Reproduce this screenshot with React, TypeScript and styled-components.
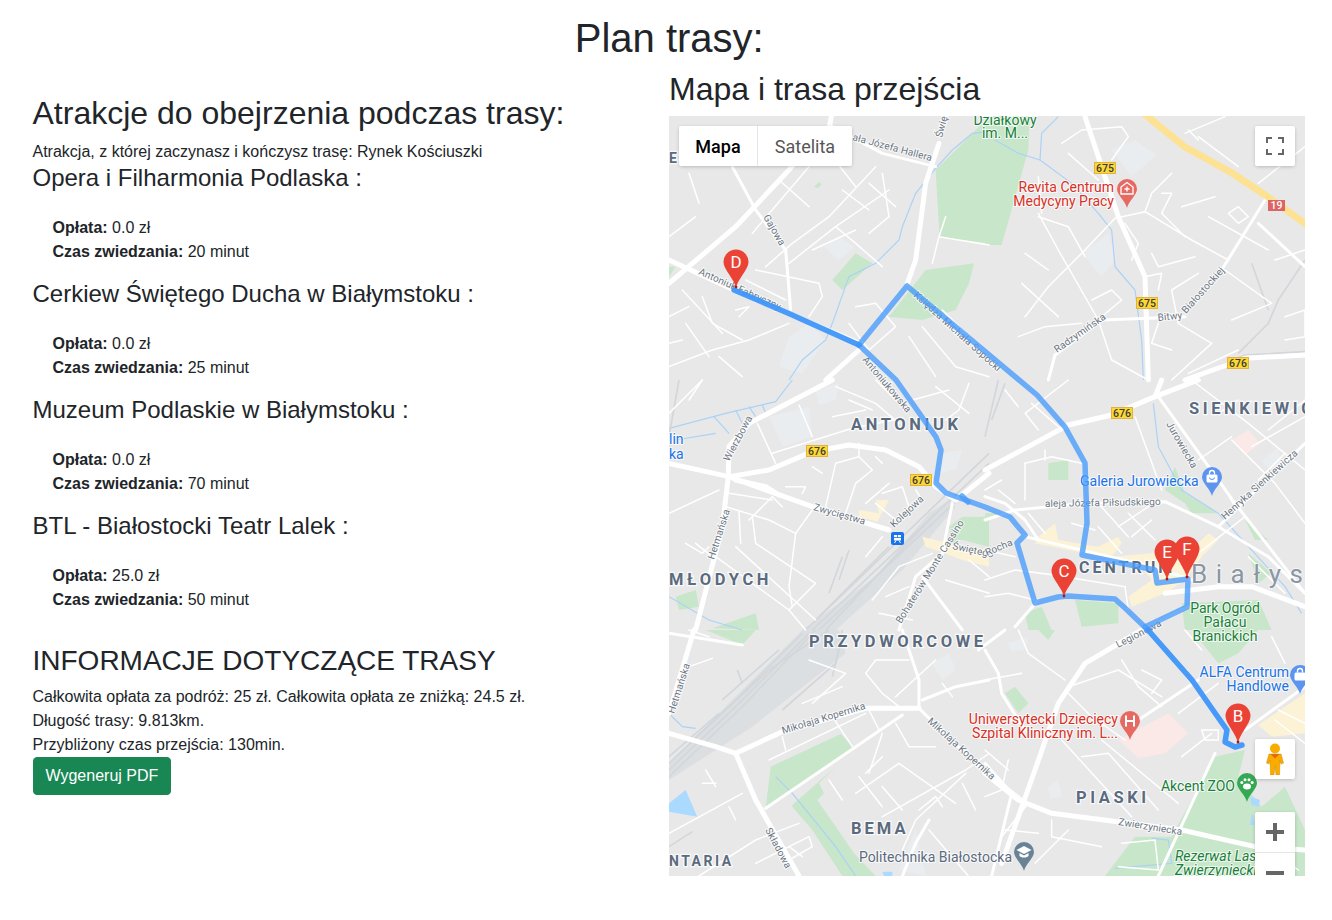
import React from 'react';
import styled, { createGlobalStyle } from 'styled-components';

const GlobalStyle = createGlobalStyle`
  html, body {
    margin: 0;
    background: #fff;
    color: #212529;
    font-family: "Liberation Sans", Arial, sans-serif;
    font-size: 16px;
    line-height: 1.5;
  }
`;

const Page = styled.div`
  padding: 14px 27px 44px 32.5px;
`;
const Title = styled.h1`
  margin: 0 0 8px;
  padding-left: 1px;
  font-size: 40px;
  font-weight: 400;
  line-height: 1.2;
  text-align: center;
`;
const Columns = styled.div`
  display: grid;
  grid-template-columns: 636.5px 636px;
`;
const InfoColumn = styled.div`
  padding-top: 24px;
`;
const SectionTitle = styled.h2`
  margin: 0 0 8px;
  font-size: 32px;
  font-weight: 400;
  line-height: 1.2;
`;
const InfoTitle = styled(SectionTitle)`
  margin: 30px 0 5px;
  font-size: 28px;
  line-height: 38px;
`;
const AttractionName = styled.h4`
  margin: 0 0 8px;
  font-size: 24px;
  font-weight: 400;
  line-height: 1.2;
`;
const Facts = styled.ul`
  margin: 0 0 16px;
  padding: 15px 0 0 20px;
  list-style: none;
`;
const Line = styled.div``;
const PdfButton = styled.button`
  display: block;
  height: 38px;
  padding: 6px 12px;
  border: 1px solid #198754;
  border-radius: 4px;
  background: #198754;
  color: #fff;
  font: inherit;
`;

const MapBox = styled.div`
  position: relative;
  width: 636px;
  height: 760px;
  overflow: hidden;
  background: #e8e8e8;
`;
const MapSvg = styled.svg`
  display: block;
`;
const Control = styled.div`
  position: absolute;
  background: #fff;
  border-radius: 2px;
  box-shadow: rgba(0, 0, 0, 0.3) 0 1px 4px -1px;
`;
const TypeSwitch = styled(Control)`
  left: 10px;
  top: 10px;
  display: flex;
  height: 40px;
  font-family: Roboto, sans-serif;
  font-size: 18px;
`;
const TypeTab = styled.div<{ $active?: boolean }>`
  display: flex;
  align-items: center;
  justify-content: center;
  width: ${p => (p.$active ? 78 : 94)}px;
  color: ${p => (p.$active ? '#000' : '#565656')};
  font-weight: ${p => (p.$active ? 500 : 400)};
  border-left: ${p => (p.$active ? 'none' : '1px solid #e6e6e6')};
`;
const SquareButton = styled(Control)<{ $top: number }>`
  left: 586px;
  top: ${p => p.$top}px;
  display: flex;
  align-items: center;
  justify-content: center;
  width: 40px;
  height: 40px;
  color: #666;
`;
const ZoomBox = styled(Control)`
  left: 586px;
  top: 696px;
  width: 40px;
  height: 81px;
  color: #666;
`;
const ZoomStep = styled.div`
  display: flex;
  align-items: center;
  justify-content: center;
  height: 40px;
`;
const ZoomRule = styled.div`
  height: 1px;
  background: #e6e6e6;
`;

const Street = styled.polyline<{ $w: number }>`
  fill: none;
  stroke: #fff;
  stroke-width: ${p => p.$w};
  stroke-linejoin: round;
  stroke-linecap: round;
`;
const River = styled.polyline`
  fill: none;
  stroke: #aad2f7;
  stroke-width: 3.5;
`;
const Rail = styled.polyline`
  fill: none;
  stroke: #d3d6da;
  stroke-width: 5;
`;
const Area = styled.polygon<{ $fill: string }>`
  fill: ${p => p.$fill};
`;
const Highway = styled.polyline`
  fill: none;
  stroke: #fde293;
  stroke-width: 7;
  stroke-linejoin: round;
`;
const RouteLine = styled.polyline<{ $deep?: boolean }>`
  fill: none;
  stroke: ${p => (p.$deep ? '#3f96f9' : '#4a9cfb')};
  stroke-width: 5.5;
  stroke-opacity: ${p => (p.$deep ? 0.95 : 0.8)};
  stroke-linejoin: round;
  stroke-linecap: round;
`;
const RoadName = styled.text`
  font-family: Roboto, sans-serif;
  font-size: 10px;
  letter-spacing: 0.1px;
  fill: #6b7683;
  stroke: #fff;
  stroke-width: 2px;
  stroke-opacity: 0.75;
  paint-order: stroke;
`;
const District = styled.text<{ $size?: number; $gap?: number }>`
  font-family: Roboto, sans-serif;
  font-size: ${p => p.$size ?? 16.5}px;
  font-weight: 700;
  letter-spacing: ${p => p.$gap ?? 3.6}px;
  fill: #5b6b7f;
  stroke: #fff;
  stroke-width: 2.5px;
  stroke-opacity: 0.8;
  paint-order: stroke;
`;
const CityName = styled.text`
  font-family: Roboto, sans-serif;
  font-size: 26px;
  letter-spacing: 8.5px;
  fill: #8a96a3;
  stroke: #fff;
  stroke-width: 2px;
  stroke-opacity: 0.6;
  paint-order: stroke;
`;
const Place = styled.text<{ $color: string; $italic?: boolean }>`
  font-family: Roboto, sans-serif;
  font-size: 14px;
  font-style: ${p => (p.$italic ? 'italic' : 'normal')};
  fill: ${p => p.$color};
  stroke: #fff;
  stroke-width: 2px;
  stroke-opacity: 0.8;
  paint-order: stroke;
`;
const PinLetter = styled.text`
  font-family: Roboto, sans-serif;
  font-size: 17px;
  fill: #fff;
  text-anchor: middle;
`;
const ShieldText = styled.text<{ $light?: boolean }>`
  font-family: Roboto, sans-serif;
  font-size: 10.5px;
  font-weight: 500;
  fill: ${p => (p.$light ? '#fff' : '#3c3c3c')};
  text-anchor: middle;
`;

type Tile = {
  x: number;
  y: number;
  parks?: string[];
  soft?: string[];
  yards?: string[];
  plazas?: string[];
  pink?: string[];
  lakes?: string[];
  rivers?: string[];
  rails?: string[];
  thin?: string[];
  mid?: string[];
  thick?: string[];
};

// coordinates read off 3x crops, one set per crop origin
const tiles: Tile[] = [
  {
    x: 669, y: 110,
    parks: ['800,180 960,20 960,400 812,382', '490,510 560,430 610,460 520,540', '770,480 915,460 900,520 860,600 760,630 660,620', '435,230 450,215 458,225 445,235', '0,470 20,470 0,500'],
    soft: ['465,410 510,380 555,410 510,450', '360,680 420,640 470,690 400,790 330,770'],
    rivers: ['960,65 910,70 850,120 800,175 740,250 700,350 690,390 620,460 540,500 490,640 470,690 400,750 360,810'],
    thin: ['620,170 480,320 370,400 290,470', '420,170 250,370', '660,240 500,350 360,460', '500,350 560,400 640,470', '260,480 450,520 460,560 420,620', '230,510 350,570', '0,770 130,720 240,690 360,640', '560,590 620,580 680,650 600,720 540,640', '760,650 860,770 960,800', '720,680 800,800', '820,600 960,740', '100,560 130,640 220,690', '40,540 160,670', '0,620 60,590', '50,640 120,740', '200,600 240,590 210,620', '430,420 560,360', '330,210 420,290', '520,240 600,300', '600,220 680,290', '810,380 960,405', '830,320 810,380 790,460', '490,140 560,230', '60,190 90,280', '0,380 80,320', '640,190 660,320 600,370', '400,90 440,70', '0,700 40,690', '150,740 220,800'],
    mid: ['490,50 640,130 800,170', '190,170 260,300 350,420 365,600'],
    thick: ['0,520 200,350 360,180 400,130', '0,450 195,540 570,700', '810,100 770,220 740,450 715,520', '570,720 470,810', '490,0 480,60'],
  },
  {
    x: 985, y: 110,
    parks: ['0,0 135,0 130,120 50,405 0,405'],
    soft: ['380,120 450,90 515,135 440,200', '290,430 370,370 390,450 350,500'],
    rivers: ['220,20 170,70 165,150 260,220 340,310 380,360 390,470 450,540 470,690 475,810', '30,90 100,130 165,150'],
    rails: ['960,450 880,570 850,640 760,730', '800,460 850,600', '600,810 780,735 960,725'],
    thin: ['230,100 290,60 410,50 430,80 380,150', '250,130 340,210', '160,320 250,350 300,440', '480,305 390,325 300,420 190,530 120,620', '480,305 620,390 730,450', '480,305 500,250 560,190', '160,310 220,420 340,630 380,750 490,810', '530,250 560,250 530,310 600,380', '730,310 760,290 790,320 760,340 730,310', '670,320 850,420', '590,290 690,260', '500,430 520,470 630,440', '640,490 560,540 580,640 680,700', '480,500 530,490 520,540', '110,520 220,620', '120,430 190,480', '320,570 380,540 410,570 350,620', '100,680 180,650 290,640', '560,720 500,700 520,640', '680,700 560,810', '610,790 760,720', '870,450 960,420', '900,620 960,600 960,680 900,690', '720,480 860,580 740,630', '600,70 720,20', '640,80 760,170', '820,220 960,110', '610,60 640,90', '420,340 460,400 440,450', '160,200 170,310'],
    mid: ['490,625 600,620', '490,625 350,630 210,735 190,810', '840,270 710,480', '820,340 960,470'],
    thick: ['300,20 400,320 480,500 490,810', '600,810 780,745 960,735'],
  },
  {
    x: 669, y: 380,
    parks: ['840,440 880,410 960,410 960,500 880,480 850,490', '130,745 260,700 270,750', '20,650 80,630 90,680 30,690'],
    soft: ['300,110 420,80 430,170 340,200', '440,30 510,10 500,60 450,75', '820,220 880,210 860,270 810,280'],
    yards: ['400,750 620,590 780,400 840,360 860,380 700,570 500,750'],
    plazas: ['570,390 630,400 620,360 660,360 625,425 570,410', '760,470 840,490 960,510 960,560 880,540 800,510 770,500'],
    rivers: ['0,145 170,100 320,65 370,0', '135,110 180,160', '200,90 220,130', '240,80 260,110', '280,75 290,100', '20,180 140,160', '0,650 120,720 220,750'],
    rails: ['410,750 960,220', '430,750 960,250', '450,750 940,290', '470,750 800,400', '440,720 660,500', '510,600 540,510', '480,640 520,530', '0,170 30,0'],
    thin: ['390,75 430,170', '265,130 320,250', '310,220 550,145 700,115', '570,190 570,230 610,270 560,310 530,400', '570,230 500,250 470,380', '430,260 460,280', '640,340 700,320 720,380 680,420', '660,310 590,370', '620,370 680,420', '0,400 150,330', '180,340 310,360', '170,380 300,420 380,460', '210,395 215,490', '250,410 260,490', '260,490 440,610 360,690', '380,460 360,620 370,680', '430,390 380,460', '140,530 360,690 410,750', '200,500 440,720', '80,490 130,530', '50,490 100,520 120,500', '620,0 700,80', '500,20 620,70 690,130', '900,10 870,90 830,120', '800,20 900,100', '740,330 760,360', '590,530 640,470', '610,660 690,560 790,520', '650,650 720,620', '630,700 730,720', '900,540 960,590', '830,600 960,640', '730,60 840,30', '540,60 610,90', '490,110 590,90', '0,100 100,0', '60,60 100,0', '240,420 310,350 340,380', '350,320 410,320 400,340', '620,230 640,250'],
    mid: ['760,590 880,750', '850,370 820,520 740,590 690,750'],
    thick: ['490,0 240,130 180,200 178,290 160,440 80,750', '0,250 180,290 430,380 660,450', '180,290 300,270 430,215 540,195 650,210 750,260 800,320 860,360 960,280', '200,300 290,320 330,345'],
  },
  {
    x: 985, y: 380,
    parks: ['190,250 250,240 250,300 190,300', '0,400 40,400 0,430', '270,660 400,670 400,730 290,740', '120,700 170,680 200,750 130,750', '540,330 570,260 600,340 700,400 620,400 600,370', '590,670 820,660 860,750 600,750', '780,420 850,480 810,480', '790,520 860,580 820,610'],
    soft: ['830,240 880,200 890,250 850,270'],
    pink: ['740,180 790,150 825,190 780,225'],
    plazas: ['160,470 210,430 220,480 340,500 400,470 410,490 380,530 500,520 520,500 530,540 640,490 670,460 700,480 650,530 600,600 540,640 440,680 430,650 500,600 470,560 300,520 150,490'],
    rivers: ['505,70 520,200 590,330 700,400 900,620 950,700'],
    rails: ['0,170 40,0', '20,120 60,10'],
    thin: ['120,250 200,230 290,250', '120,250 120,360', '180,210 180,240', '450,110 530,330', '400,440 490,380', '430,400 510,480', '440,470 500,420', '340,370 430,470', '0,600 90,570 250,590', '240,590 420,620', '420,620 430,690', '0,650 70,640 150,660', '620,0 790,130 960,270', '800,200 960,110', '740,180 870,310 960,430', '700,100 760,60', '850,150 960,60', '640,240 740,170', '0,510 90,530', '640,520 780,410', '790,530 900,640', '250,0 120,100 160,150', '60,30 100,80', '140,70 220,140', '820,300 900,220', '710,310 750,380', '40,330 90,370', '340,440 410,520', '130,400 180,460', '260,430 330,450', '0,330 50,300'],
    mid: ['0,350 60,370 120,420 160,480', '120,470 500,560 620,600', '90,740 160,660', '610,680 480,745', '520,50 750,370 960,640', '0,420 90,390 300,370 540,365 700,440 850,530 960,640', '700,440 960,190'],
    thick: ['0,270 250,135 380,105 510,50 640,0', '540,640 700,620 800,620 960,680', '510,50 530,0'],
  },
  {
    x: 669, y: 630,
    parks: ['305,410 515,312 555,355 290,535', '370,525 500,410 450,460 465,490 445,510 555,670 620,738 520,738 430,600 370,530', '110,0 260,0 220,45'],
    soft: ['790,100 840,70 860,120 820,150', '690,720 740,600 770,738'],
    yards: ['0,400 400,0 510,0 530,70 250,290 0,450'],
    lakes: ['0,520 50,480 85,560 0,545', '640,725 670,725 670,738 645,738'],
    rivers: ['320,440 370,490 500,650 560,738', '0,250 40,290 80,295'],
    rails: ['0,420 200,230 420,10', '0,440 220,230 440,0', '0,400 190,220 400,10', '60,340 300,120 480,0', '160,210 330,60', '0,380 150,250', '340,240 500,100 520,0', '490,140 520,20', '0,650 70,605', '205,120 220,160'],
    thin: ['60,110 130,85', '590,130 620,90 720,90', '590,130 640,190 690,230', '680,200 800,90', '600,240 630,300', '490,260 550,350', '300,390 590,250', '340,320 350,360', '640,310 600,430', '680,280 720,350 800,350', '560,490 690,400 860,520', '590,430 640,380', '480,450 520,510', '570,440 640,530', '640,470 700,540', '640,560 890,420 960,370', '0,610 220,490', '180,530 200,570', '110,420 140,470', '100,460 140,460', '90,738 260,630 390,580', '260,700 420,620 430,650 360,690', '360,650 400,680', '820,160 850,200', '750,540 800,500 820,530', '780,600 900,740', '880,460 920,540', '700,660 740,570 890,430', '420,90 530,130 430,220', '400,220 520,170', '60,0 120,20'],
    mid: ['290,535 700,255', '760,210 860,170 960,150', '750,235 960,440', '700,0 750,150 750,235', '0,10 220,45', '700,738 740,640 780,570'],
    thick: ['0,310 140,350 200,370', '200,370 340,305 590,235 750,235', '200,370 260,510 390,738', '0,250 75,0'],
  },
  {
    x: 985, y: 630,
    parks: ['620,0 820,0 760,70 700,100', '60,190 90,170 130,220 100,250', '690,380 780,360 760,440 830,530 900,470 960,600 960,738 360,738 450,620 560,620', '160,0 210,0 190,30'],
    soft: ['70,40 130,20 120,60 80,65', '190,470 220,450 230,500 195,505'],
    pink: ['400,330 550,250 610,310 540,370 460,385'],
    plazas: ['820,285 960,190 960,310 860,320', '590,110 610,120 600,140'],
    lakes: ['795,500 825,510 820,530 800,525', '800,550 810,585 795,585'],
    rivers: ['500,625 550,630 560,700 390,715'],
    thin: ['100,0 130,70 240,150', '0,150 110,130', '250,170 400,120 530,200', '410,90 460,170 530,230', '470,120 530,150 500,190', '240,180 320,260 420,330', '230,330 440,560', '290,380 370,370 520,540', '350,330 580,520', '580,250 700,160', '590,380 680,310', '0,500 50,480 70,390', '200,570 200,620 350,650', '60,600 160,610', '150,700 250,600', '0,420 130,520 50,620', '50,470 120,520', '650,300 700,300 700,330 660,330 650,300', '600,0 650,60', '860,20 900,100', '870,270 960,340', '410,640 510,630 520,720 400,710', '960,280 880,240', '0,360 70,420', '860,660 940,720'],
    mid: ['460,270 640,150', '780,300 960,170', '690,370 520,738', '0,60 40,130 50,190 100,270 130,310', '-20,60 60,0', '0,400 80,490 20,738'],
    thick: ['470,0 300,100 220,220 150,420 50,700', '0,430 100,510 200,550 590,600 810,650 960,660'],
  },
];

const layer = (render: (t: Tile) => React.ReactNode) =>
  tiles.map((t, i) => (
    <g key={i} transform={`translate(${t.x} ${t.y}) scale(0.33333)`}>
      {render(t)}
    </g>
  ));

const routeLegs = [
  '859,345 907,286 1037,395 1065,427 1085,463 1087,523 1082,555 1155,570 1157,583 1188,579 1187,607 1145,627',
  '859,345 896,380 936,437 941,450 936,483 946,493 985,507 1010,517 1025,535 1017,543 1035,603 1058,597 1068,596 1115,599 1125,608 1148,630',
  '962,496 968,502',
];
const deepLegs = [
  '734,290 790,314 859,345',
  '1148,630 1192,680 1215,713 1227,730 1225,742 1235,747 1242,745',
];

const roadNames: [string, number, number, number][] = [
  ['Świętego', 942, 138, -75],
  ['ała Józefa Hallera', 852, 140, 15],
  ['Gajowa', 763, 217, 60],
  ['Antoniuk Fabryczny', 698, 274, 24],
  ['Księdza Michała Sopoćki', 913, 296, 42],
  ['Antoniukowska', 862, 360, 50],
  ['Radzymińska', 1057, 353, -35],
  ['Bitwy', 1158, 321, -6],
  ['Białostockiej', 1186, 314, -48],
  ['Jurowiecka', 1166, 424, 60],
  ['Henryka Sienkiewicza', 1225, 520, -42],
  ['aleja Józefa Piłsudskiego', 1045, 507, -1],
  ['Świętego', 952, 549, 12],
  ['Rocha', 987, 556, -23],
  ['Wierzbowa', 729, 462, -62],
  ['Hetmańska', 714, 560, -72],
  ['Zwycięstwa', 813, 510, 16],
  ['Kolejowa', 894, 528, -43],
  ['Bohaterów Monte Cassino', 901, 624, -58],
  ['Hetmańska', 674, 714, -72],
  ['Mikołaja Kopernika', 783, 734, -17],
  ['Mikołaja Kopernika', 927, 722, 42],
  ['Składowa', 765, 830, 62],
  ['Legionowa', 1118, 648, -27],
  ['Zwierzyniecka', 1118, 825, 9],
];

const districts: [string, number, number, number?, number?][] = [
  ['ES', 669, 163, 14, 2],
  ['ANTONIUK', 851, 430],
  ['SIENKIEWICZ', 1189, 414],
  ['MŁODYCH', 669, 585],
  ['PRZYDWORCOWE', 809, 647],
  ['CENTRUM', 1079, 573, 16, 3],
  ['PIASKI', 1076, 803],
  ['BEMA', 851, 834, 16.5, 3],
  ['NTARIA', 669, 866, 14, 2.5],
];

const places: [string, number, number, string, ('end' | 'middle')?, boolean?][] = [
  ['Działkowy', 1005, 125, '#188038', 'middle'],
  ['im. M...', 1005, 138, '#188038', 'middle'],
  ['Revita Centrum', 1114, 192, '#d93025', 'end'],
  ['Medycyny Pracy', 1114, 206, '#d93025', 'end'],
  ['Galeria Jurowiecka', 1080, 486, '#1a73e8'],
  ['Park Ogród', 1225, 613, '#188038', 'middle'],
  ['Pałacu', 1225, 627, '#188038', 'middle'],
  ['Branickich', 1225, 641, '#188038', 'middle'],
  ['ALFA Centrum', 1289, 677, '#1a73e8', 'end'],
  ['Handlowe', 1289, 691, '#1a73e8', 'end'],
  ['Uniwersytecki Dziecięcy', 1118, 724, '#d93025', 'end'],
  ['Szpital Kliniczny im. L...', 1118, 738, '#d93025', 'end'],
  ['Akcent ZOO', 1235, 791, '#188038', 'end'],
  ['Politechnika Białostocka', 1012, 862, '#5b6b7f', 'end'],
  ['Rezerwat Las', 1175, 861, '#188038', undefined, true],
  ['Zwierzyniecki', 1175, 875, '#188038', undefined, true],
  ['lin', 669, 444, '#1a73e8'],
  ['ka', 669, 459, '#1a73e8'],
];

const shields: [string, number, number][] = [
  ['675', 1105, 168],
  ['675', 1147, 303],
  ['676', 1238, 363],
  ['676', 1122, 413],
  ['676', 817, 451],
  ['676', 921, 480],
];

const pinPath = (cx: number, cy: number, r: number, tip: number) =>
  `M${cx},${tip} C${cx - 1.5},${tip - r * 0.7} ${cx - r},${cy + r * 0.6} ${cx - r},${cy} ` +
  `A${r},${r} 0 1 1 ${cx + r},${cy} C${cx + r},${cy + r * 0.6} ${cx + 1.5},${tip - r * 0.7} ${cx},${tip} Z`;

const markers: [string, number, number, number][] = [
  ['D', 736, 262, 288],
  ['C', 1064, 571, 597],
  ['F', 1187, 549, 578],
  ['E', 1167, 552, 580],
  ['B', 1238, 716, 743],
];

const Marker = ({ label, x, y, tip }: { label: string; x: number; y: number; tip: number }) => (
  <g>
    <path d={pinPath(x, y, 12.5, tip)} fill="#ea4335" />
    <circle cx={x} cy={tip - 1} r="1.4" fill="#b31412" />
    <PinLetter x={x} y={y + 5.5}>{label}</PinLetter>
  </g>
);

const PoiPins = () => (
  <g>
    <path d={pinPath(1127, 189, 10, 208)} fill="#e66a62" />
    <path d="M1121 187l6-4.500 6 4.500v7h-12z" fill="none" stroke="#fff" strokeWidth="1.3" />
    <path d="M1127 186.500v5M1124.500 189h5" stroke="#fff" strokeWidth="1.3" />

    <path d={pinPath(1130, 721, 10, 740)} fill="#e66a62" />
    <path d="M1126 715.500v11M1134 715.500v11M1126 721h8" stroke="#fff" strokeWidth="2" fill="none" />

    <path d={pinPath(1212, 477, 10, 496)} fill="#5c94f0" />
    <rect x="1206.500" y="474.500" width="11" height="8" rx="1.500" fill="#fff" />
    <path d="M1209.500 474.500v-1.500a2.500 2.500 0 0 1 5 0v1.500" fill="none" stroke="#fff" strokeWidth="1.300" />
    <path d="M1209.500 477.500a2.500 2 0 0 0 5 0" fill="none" stroke="#5c94f0" strokeWidth="1" />

    <path d={pinPath(1300, 675, 10, 694)} fill="#5c94f0" />
    <rect x="1294.500" y="672.500" width="11" height="8" rx="1.500" fill="#fff" />
    <path d="M1297.500 672.500v-1.500a2.500 2.500 0 0 1 5 0v1.500" fill="none" stroke="#fff" strokeWidth="1.300" />

    <path d={pinPath(1247, 783, 10, 802)} fill="#34a853" />
    <ellipse cx="1247" cy="786.500" rx="4" ry="3" fill="#fff" />
    <circle cx="1241.800" cy="782.500" r="1.500" fill="#fff" />
    <circle cx="1245" cy="779.800" r="1.500" fill="#fff" />
    <circle cx="1249" cy="779.800" r="1.500" fill="#fff" />
    <circle cx="1252.200" cy="782.500" r="1.500" fill="#fff" />

    <path d={pinPath(1024, 852, 10, 871)} fill="#6a8296" />
    <path d="M1024 846l7.500 4-7.500 4-7.500-4z" fill="#fff" />
    <path d="M1019.500 853v3c2.500 2 6.500 2 9 0v-3l-4.500 2.500z" fill="#fff" />
  </g>
);

const RoadMap = () => (
  <MapSvg width="636" height="760" viewBox="669 116 636 760">
    {layer(t => (t.parks ?? []).map(p => <Area key={p} $fill="#c8e6c9" points={p} />))}
    {layer(t => (t.soft ?? []).map(p => <Area key={p} $fill="#e9edf0" points={p} />))}
    {layer(t => (t.yards ?? []).map(p => <Area key={p} $fill="#dcdfe2" points={p} />))}
    {layer(t => (t.plazas ?? []).map(p => <Area key={p} $fill="#fcf2d6" points={p} />))}
    {layer(t => (t.pink ?? []).map(p => <Area key={p} $fill="#fbe9e7" points={p} />))}
    {layer(t => (t.lakes ?? []).map(p => <Area key={p} $fill="#aadaff" points={p} />))}
    {layer(t => (t.rivers ?? []).map(p => <River key={p} points={p} />))}
    {layer(t => (t.rails ?? []).map(p => <Rail key={p} points={p} />))}
    {layer(t => (t.thin ?? []).map(p => <Street key={p} $w={4.5} points={p} />))}
    {layer(t => (t.mid ?? []).map(p => <Street key={p} $w={9} points={p} />))}
    {layer(t => (t.thick ?? []).map(p => <Street key={p} $w={15} points={p} />))}
    <Highway points="1142,112 1185,147 1232,173 1268,197 1310,227" />

    {roadNames.map(([name, x, y, angle]) => (
      <RoadName key={`${name}${x}`} x={x} y={y} transform={`rotate(${angle} ${x} ${y})`}>{name}</RoadName>
    ))}
    {districts.map(([name, x, y, size, gap]) => (
      <District key={name} x={x} y={y} $size={size} $gap={gap}>{name}</District>
    ))}
    <CityName x="1191" y="583">Białys</CityName>
    {places.map(([name, x, y, color, anchor, italic]) => (
      <Place key={name} x={x} y={y} $color={color} $italic={italic} textAnchor={anchor}>{name}</Place>
    ))}

    {shields.map(([code, x, y]) => (
      <g key={`${code}${x}`}>
        <rect x={x - 10.5} y={y - 5.5} width="21" height="11" fill="#fdd835" stroke="#e3b23a" />
        <ShieldText x={x} y={y + 4}>{code}</ShieldText>
      </g>
    ))}
    <rect x="1268" y="200" width="17" height="11" fill="#dd6464" />
    <ShieldText $light x="1276.500" y="209">19</ShieldText>

    <rect x="891" y="532" width="13" height="13" rx="2" fill="#1a73e8" />
    <path d="M894 535h7v5.500h-7z" fill="#fff" />
    <path d="M894.500 543l1.500-2.500M900.500 543l-1.500-2.500" stroke="#fff" />
    <path d="M894 537.500h7M897.500 535v2.500" stroke="#1a73e8" strokeWidth=".8" />

    <PoiPins />
    {routeLegs.map(points => <RouteLine key={points} points={points} />)}
    {deepLegs.map(points => <RouteLine key={points} $deep points={points} />)}
    {markers.map(([label, x, y, tip]) => <Marker key={label} label={label} x={x} y={y} tip={tip} />)}
  </MapSvg>
);

const FullscreenIcon = () => (
  <svg width="18" height="18" viewBox="0 0 18 18">
    <path d="M1 6V1h5M12 1h5v5M17 12v5h-5M6 17H1v-5" fill="none" stroke="#666" strokeWidth="2" />
  </svg>
);

const PlusIcon = () => (
  <svg width="18" height="18" viewBox="0 0 18 18">
    <path d="M0 9h18M9 0v18" stroke="#666" strokeWidth="4" />
  </svg>
);

const MinusIcon = () => (
  <svg width="18" height="18" viewBox="0 0 18 18">
    <path d="M0 9h18" stroke="#666" strokeWidth="4" />
  </svg>
);

const Pegman = () => (
  <svg width="18" height="32" viewBox="0 0 18 32">
    <circle cx="9" cy="5.500" r="5" fill="#f9ab00" />
    <path d="M3 11h12l2.500 9-2.500 1-1-4-.5 15H10l-1-9-1 9H4.500L4 17l-1 4-2.500-1z" fill="#f9ab00" stroke="#d38a00" strokeWidth=".5" />
    <path d="M4.500 11L9 15.500 13.500 11z" fill="#e06a10" />
  </svg>
);

const stops = [
  { name: 'Opera i Filharmonia Podlaska :', fee: '0.0 zł', time: '20 minut' },
  { name: 'Cerkiew Świętego Ducha w Białymstoku :', fee: '0.0 zł', time: '25 minut' },
  { name: 'Muzeum Podlaskie w Białymstoku :', fee: '0.0 zł', time: '70 minut' },
  { name: 'BTL - Białostocki Teatr Lalek :', fee: '25.0 zł', time: '50 minut' },
];

const App = () => (
  <Page>
    <GlobalStyle />
    <Title>Plan trasy:</Title>
    <Columns>
      <InfoColumn>
        <SectionTitle>Atrakcje do obejrzenia podczas trasy:</SectionTitle>
        <Line>Atrakcja, z której zaczynasz i kończysz trasę: Rynek Kościuszki</Line>
        {stops.map(stop => (
          <React.Fragment key={stop.name}>
            <AttractionName>{stop.name}</AttractionName>
            <Facts>
              <li><b>Opłata:</b> {stop.fee}</li>
              <li><b>Czas zwiedzania:</b> {stop.time}</li>
            </Facts>
          </React.Fragment>
        ))}
        <InfoTitle>INFORMACJE DOTYCZĄCE TRASY</InfoTitle>
        <Line>Całkowita opłata za podróż: 25 zł. Całkowita opłata ze zniżką: 24.5 zł.</Line>
        <Line>Długość trasy: 9.813km.</Line>
        <Line>Przybliżony czas przejścia: 130min.</Line>
        <PdfButton>Wygeneruj PDF</PdfButton>
      </InfoColumn>
      <div>
        <SectionTitle>Mapa i trasa przejścia</SectionTitle>
        <MapBox>
          <RoadMap />
          <TypeSwitch>
            <TypeTab $active>Mapa</TypeTab>
            <TypeTab>Satelita</TypeTab>
          </TypeSwitch>
          <SquareButton $top={10}>
            <FullscreenIcon />
          </SquareButton>
          <SquareButton $top={623}>
            <Pegman />
          </SquareButton>
          <ZoomBox>
            <ZoomStep><PlusIcon /></ZoomStep>
            <ZoomRule />
            <ZoomStep><MinusIcon /></ZoomStep>
          </ZoomBox>
        </MapBox>
      </div>
    </Columns>
  </Page>
);

export default App;
